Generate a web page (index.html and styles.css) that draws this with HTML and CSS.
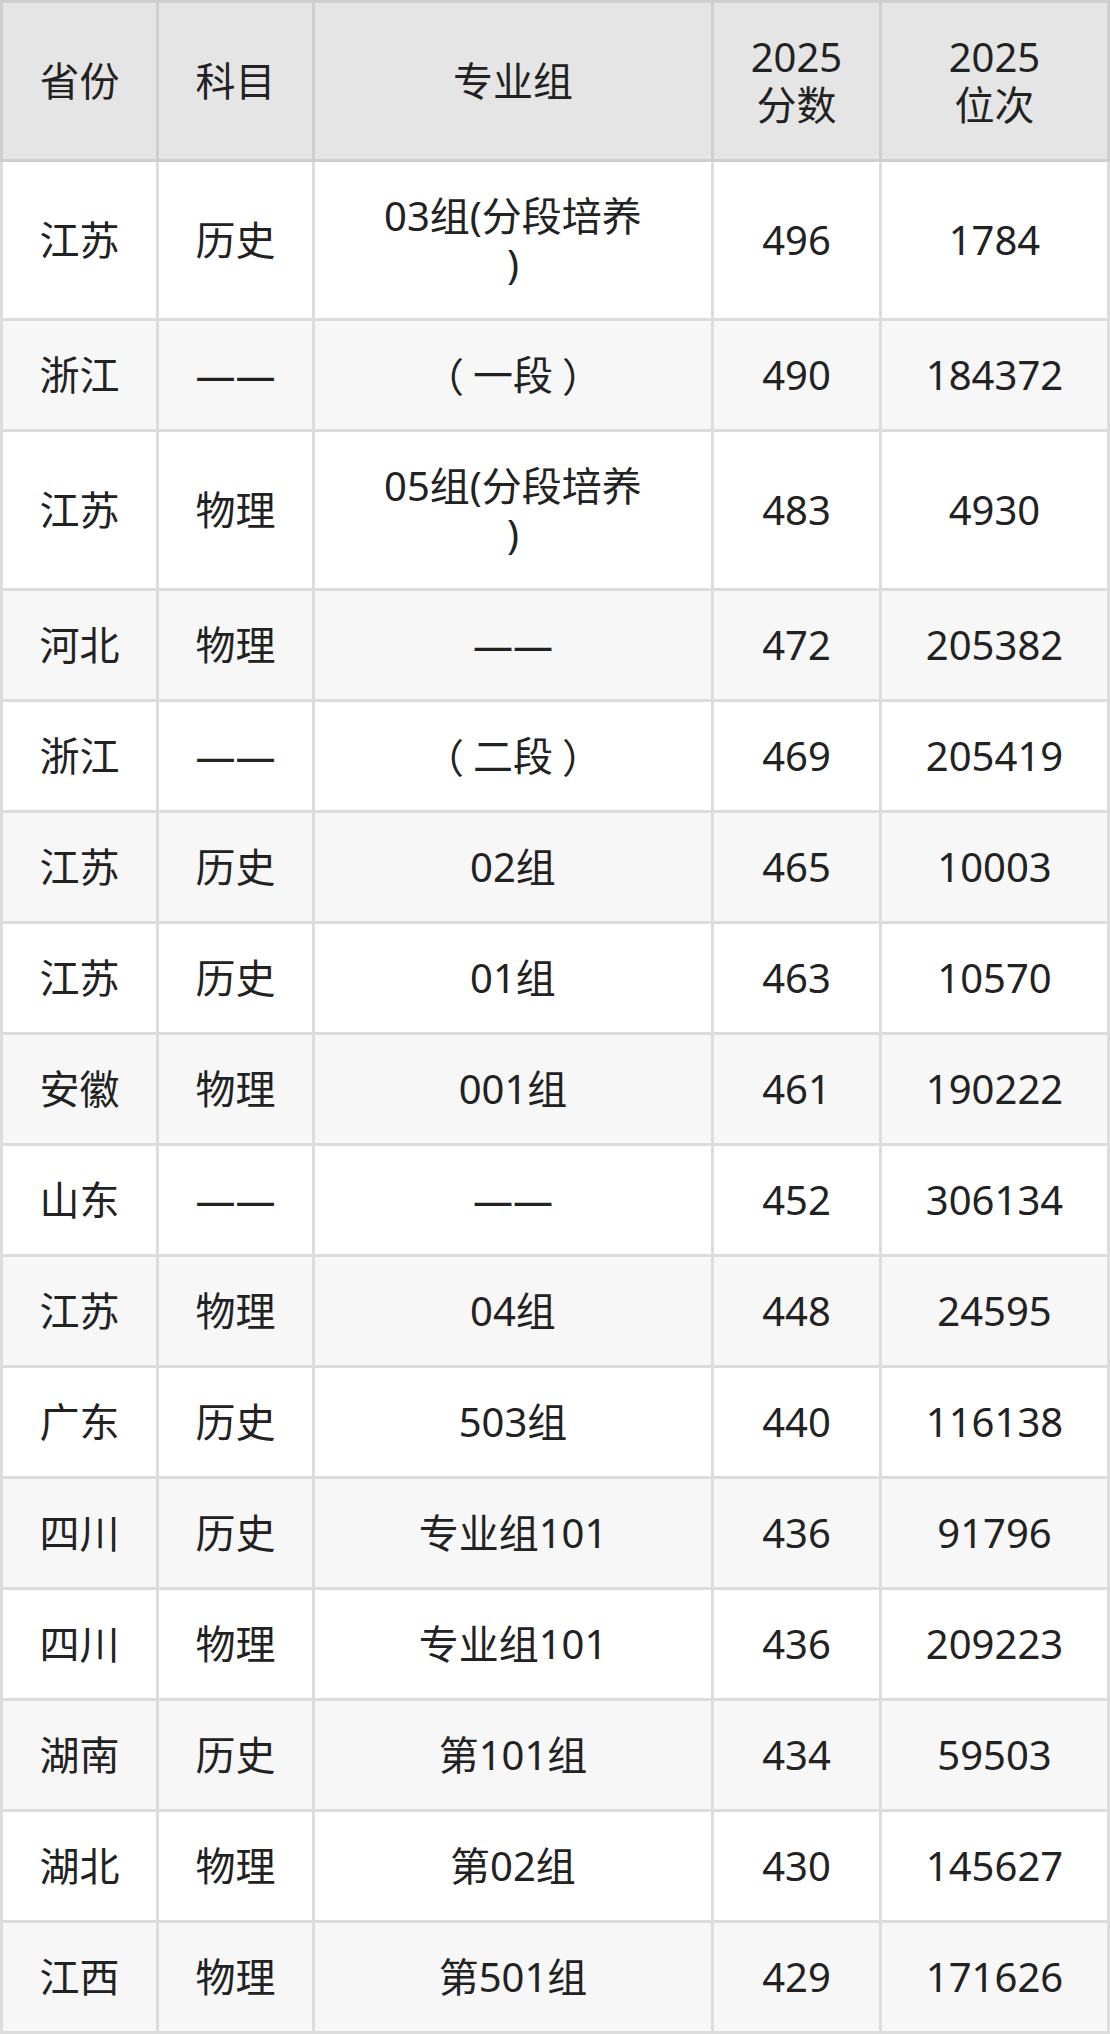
FILE: index.html
```html
<!DOCTYPE html>
<html lang="zh-CN">
<head>
<meta charset="utf-8">
<title>分数位次</title>
<link rel="stylesheet" href="styles.css">
</head>
<body>
<table class="score-table">
  <colgroup>
    <col class="c-prov">
    <col class="c-subj">
    <col class="c-grp">
    <col class="c-score">
    <col class="c-rank">
  </colgroup>
  <thead>
    <tr>
      <th>省份</th>
      <th>科目</th>
      <th>专业组</th>
      <th>2025<br>分数</th>
      <th>2025<br>位次</th>
    </tr>
  </thead>
  <tbody>
    <tr><td>江苏</td><td>历史</td><td class="grp">03组(分段培养)</td><td>496</td><td>1784</td></tr>
    <tr><td>浙江</td><td>——</td><td class="grp"><span class="fw fw-o">（</span>一段<span class="fw fw-c">）</span></td><td>490</td><td>184372</td></tr>
    <tr><td>江苏</td><td>物理</td><td class="grp">05组(分段培养)</td><td>483</td><td>4930</td></tr>
    <tr><td>河北</td><td>物理</td><td class="grp">——</td><td>472</td><td>205382</td></tr>
    <tr><td>浙江</td><td>——</td><td class="grp"><span class="fw fw-o">（</span>二段<span class="fw fw-c">）</span></td><td>469</td><td>205419</td></tr>
    <tr><td>江苏</td><td>历史</td><td class="grp">02组</td><td>465</td><td>10003</td></tr>
    <tr><td>江苏</td><td>历史</td><td class="grp">01组</td><td>463</td><td>10570</td></tr>
    <tr><td>安徽</td><td>物理</td><td class="grp">001组</td><td>461</td><td>190222</td></tr>
    <tr><td>山东</td><td>——</td><td class="grp">——</td><td>452</td><td>306134</td></tr>
    <tr><td>江苏</td><td>物理</td><td class="grp">04组</td><td>448</td><td>24595</td></tr>
    <tr><td>广东</td><td>历史</td><td class="grp">503组</td><td>440</td><td>116138</td></tr>
    <tr><td>四川</td><td>历史</td><td class="grp">专业组101</td><td>436</td><td>91796</td></tr>
    <tr><td>四川</td><td>物理</td><td class="grp">专业组101</td><td>436</td><td>209223</td></tr>
    <tr><td>湖南</td><td>历史</td><td class="grp">第101组</td><td>434</td><td>59503</td></tr>
    <tr><td>湖北</td><td>物理</td><td class="grp">第02组</td><td>430</td><td>145627</td></tr>
    <tr><td>江西</td><td>物理</td><td class="grp">第501组</td><td>429</td><td>171626</td></tr>
  </tbody>
</table>
</body>
</html>
```
FILE: styles.css
```css
html, body {
  margin: 0;
  padding: 0;
  background: #ffffff;
}

.score-table {
  width: 1110px;
  table-layout: fixed;
  border-collapse: separate;
  border-spacing: 0;
  font-family: "Noto Sans", "Noto Sans CJK SC", sans-serif;
  font-size: 40px;
  line-height: 48px;
  color: #222222;
}

.c-prov { width: 159px; }
.c-subj { width: 156px; }
.c-grp { width: 399px; }
.c-score { width: 168px; }
.c-rank { width: 228px; }

.score-table th,
.score-table td {
  box-sizing: border-box;
  padding: 30px 8px;
  text-align: center;
  vertical-align: middle;
  font-weight: normal;
  word-break: break-all;
}

.score-table th {
  background: #e5e5e5;
  border-top: 3px solid #cfcfcf;
  border-right: 3px solid #cfcfcf;
  border-bottom: 3px solid #cfcfcf;
}

.score-table th:first-child {
  border-left: 3px solid #cfcfcf;
}

.score-table td {
  border-right: 3px solid #dddddd;
  border-bottom: 3px solid #dddddd;
}

.score-table td:first-child {
  border-left: 3px solid #dddddd;
}

.score-table tbody tr:nth-child(even) td {
  background: #f7f7f7;
}

.score-table td.grp {
  padding-left: 66px;
  padding-right: 66px;
  line-break: anywhere;
}

.fw {
  display: inline-block;
  width: 1em;
  height: 48px;
  text-align: left;
  vertical-align: top;
  white-space: nowrap;
  font-family: "Noto Sans CJK SC", sans-serif;
}

.fw-o {
  text-indent: -9px;
}

.fw-c {
  text-indent: 9px;
}
```
